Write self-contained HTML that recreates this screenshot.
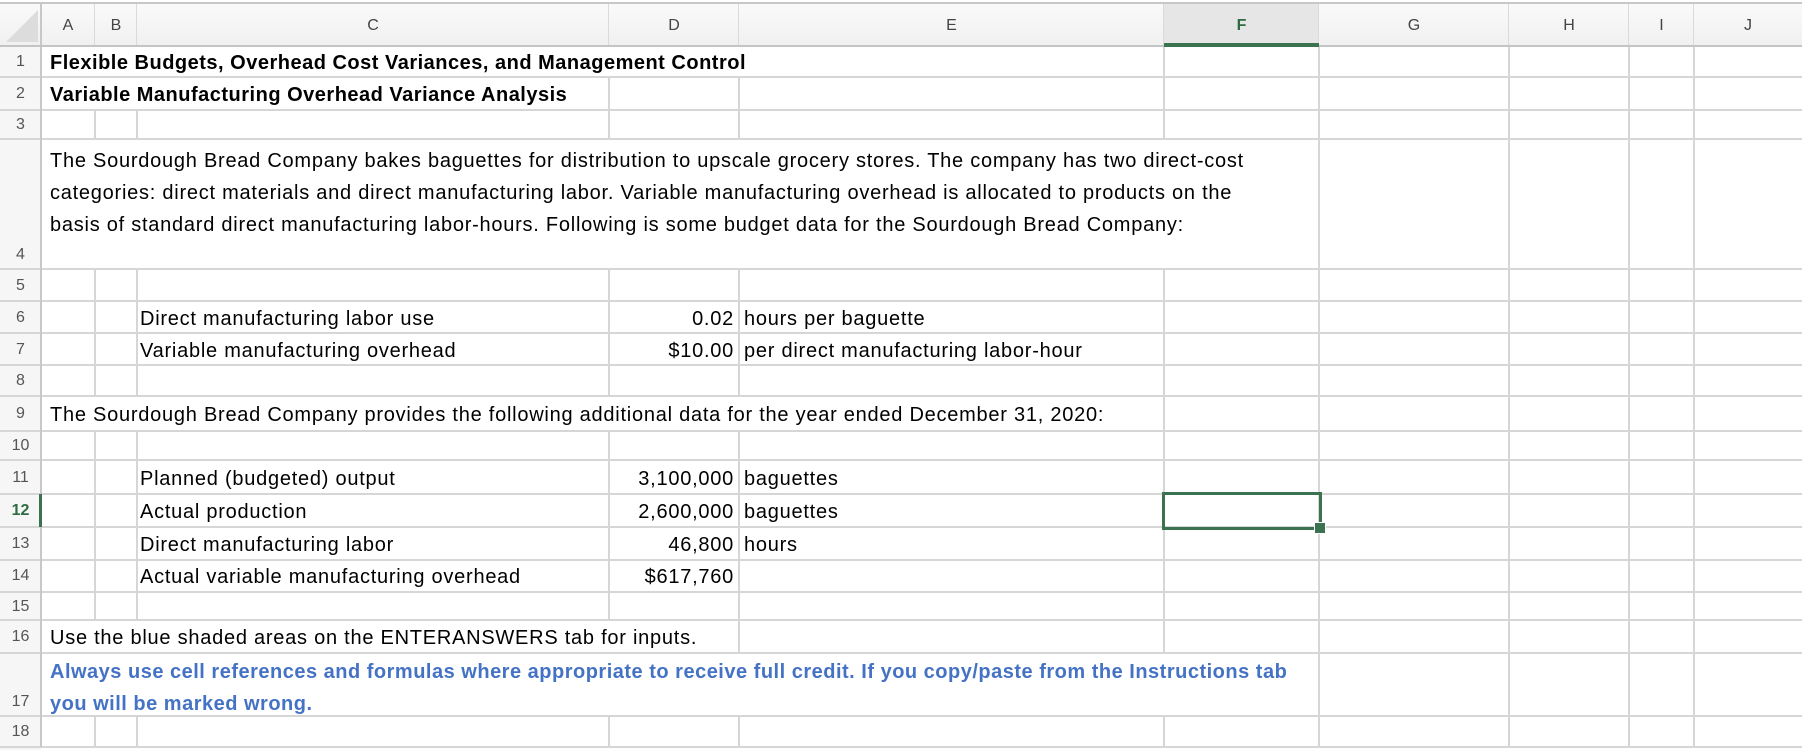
<!DOCTYPE html>
<html><head><meta charset="utf-8"><style>
body{margin:0;width:1802px;height:750px;overflow:hidden;background:#fff;font-family:"Liberation Sans",Arial,sans-serif;position:relative}
.l{position:absolute;background:#d6d6d6}
.t{position:absolute;font-size:20px;letter-spacing:0.75px;color:#000;white-space:nowrap;line-height:20px}
.b{font-weight:bold;letter-spacing:0.5px}
.r{text-align:right}
.hd{position:absolute;font-size:16px;color:#444;text-align:center;line-height:16px}
.rn{position:absolute;left:0;width:41px;text-align:center;font-size:16px;color:#555;line-height:16px}
</style></head><body>
<div style="position:absolute;left:0;top:3px;width:1802px;height:43px;background:linear-gradient(#fafafa,#f0f0f0)"></div>
<div style="position:absolute;left:0;top:46px;width:41px;height:704px;background:#f6f6f6"></div>
<div style="position:absolute;left:0;top:2px;width:1802px;height:2px;background:#c8c8c8"></div>
<div style="position:absolute;left:1164px;top:4px;width:155px;height:42px;background:#e6e6e6"></div>
<svg style="position:absolute;left:4px;top:8px" width="36" height="36"><polygon points="34,2 34,34 2,34" fill="#dcdcdc"/></svg>
<div id="g"></div>
<div style="position:absolute;left:1164px;top:43px;width:155px;height:4px;background:#3b7350"></div>
<div style="position:absolute;left:39px;top:494px;width:3px;height:33px;background:#3b7350"></div>

<div class="hd" style="left:41px;width:54px;top:18px">A</div>
<div class="hd" style="left:95px;width:42px;top:18px">B</div>
<div class="hd" style="left:137px;width:472px;top:18px">C</div>
<div class="hd" style="left:609px;width:130px;top:18px">D</div>
<div class="hd" style="left:739px;width:425px;top:18px">E</div>
<div class="hd" style="left:1164px;width:155px;top:18px;color:#2e6b42;font-weight:bold">F</div>
<div class="hd" style="left:1319px;width:190px;top:18px">G</div>
<div class="hd" style="left:1509px;width:120px;top:18px">H</div>
<div class="hd" style="left:1629px;width:65px;top:18px">I</div>
<div class="hd" style="left:1694px;width:108px;top:18px">J</div>

<div class="rn" style="top:54px">1</div>
<div class="rn" style="top:86px">2</div>
<div class="rn" style="top:117px">3</div>
<div class="rn" style="top:247px">4</div>
<div class="rn" style="top:278px">5</div>
<div class="rn" style="top:310px">6</div>
<div class="rn" style="top:342px">7</div>
<div class="rn" style="top:373px">8</div>
<div class="rn" style="top:406px">9</div>
<div class="rn" style="top:438px">10</div>
<div class="rn" style="top:470px">11</div>
<div class="rn" style="top:503px;color:#2e6b42;font-weight:bold">12</div>
<div class="rn" style="top:536px">13</div>
<div class="rn" style="top:568px">14</div>
<div class="rn" style="top:599px">15</div>
<div class="rn" style="top:629px">16</div>
<div class="rn" style="top:694px">17</div>
<div class="rn" style="top:724px">18</div>

<div class="t b" style="left:50px;top:53px">Flexible Budgets, Overhead Cost Variances, and Management Control</div>
<div class="t b" style="left:50px;top:85px">Variable Manufacturing Overhead Variance Analysis</div>
<div class="t" style="left:50px;top:151px">The Sourdough Bread Company bakes baguettes for distribution to upscale grocery stores. The company has two direct-cost</div>
<div class="t" style="left:50px;top:183px">categories: direct materials and direct manufacturing labor. Variable manufacturing overhead is allocated to products on the</div>
<div class="t" style="left:50px;top:215px">basis of standard direct manufacturing labor-hours. Following is some budget data for the Sourdough Bread Company:</div>
<div class="t" style="left:140px;top:309px">Direct manufacturing labor use</div>
<div class="t" style="left:140px;top:341px">Variable manufacturing overhead</div>
<div class="t r" style="left:609px;width:125px;top:309px">0.02</div>
<div class="t r" style="left:609px;width:125px;top:341px">$10.00</div>
<div class="t" style="left:744px;top:309px">hours per baguette</div>
<div class="t" style="left:744px;top:341px">per direct manufacturing labor-hour</div>
<div class="t" style="left:50px;top:405px">The Sourdough Bread Company provides the following additional data for the year ended December 31, 2020:</div>
<div class="t" style="left:140px;top:469px">Planned (budgeted) output</div>
<div class="t" style="left:140px;top:502px">Actual production</div>
<div class="t" style="left:140px;top:535px">Direct manufacturing labor</div>
<div class="t" style="left:140px;top:567px">Actual variable manufacturing overhead</div>
<div class="t r" style="left:600px;width:134px;top:469px">3,100,000</div>
<div class="t r" style="left:600px;width:134px;top:502px">2,600,000</div>
<div class="t r" style="left:609px;width:125px;top:535px">46,800</div>
<div class="t r" style="left:609px;width:125px;top:567px">$617,760</div>
<div class="t" style="left:744px;top:469px">baguettes</div>
<div class="t" style="left:744px;top:502px">baguettes</div>
<div class="t" style="left:744px;top:535px">hours</div>
<div class="t" style="left:50px;top:628px">Use the blue shaded areas on the ENTERANSWERS tab for inputs.</div>
<div class="t b" style="left:50px;top:662px;color:#4472c4">Always use cell references and formulas where appropriate to receive full credit. If you copy/paste from the Instructions tab</div>
<div class="t b" style="left:50px;top:694px;color:#4472c4">you will be marked wrong.</div>

<div style="position:absolute;left:1162px;top:492px;width:154px;height:32px;border:3px solid #3b7350"></div>
<div style="position:absolute;left:1314px;top:522px;width:10px;height:10px;background:#3b7350;border:1px solid #fff"></div>

<script>
var cols=[41,95,137,609,739,1164,1319,1509,1629,1694];
var rows=[46,77,110,139,269,301,333,365,396,431,460,494,527,560,592,620,653,716,747];
var start=[5,3,0,6,0,0,0,0,5,0,0,0,0,0,0,4,6,0];
var h='';
for(var i=0;i<rows.length;i++){h+='<div class="l" style="left:0;top:'+(rows[i]-1)+'px;width:1802px;height:2px"></div>';}
for(var r=0;r<rows.length-1;r++){
  for(var c=0;c<cols.length;c++){
    if(c>0&&c<start[r])continue;
    if(c==0){h+='<div class="l" style="left:40px;top:'+rows[r]+'px;width:2px;height:'+(rows[r+1]-rows[r])+'px;background:#c8c8c8"></div>';continue;}
    h+='<div class="l" style="left:'+(cols[c]-1)+'px;top:'+rows[r]+'px;width:2px;height:'+(rows[r+1]-rows[r])+'px"></div>';
  }
}
for(var c=1;c<cols.length;c++){h+='<div class="l" style="left:'+(cols[c]-1)+'px;top:4px;width:1px;height:42px;background:#dadada"></div>';}
h+='<div class="l" style="left:40px;top:4px;width:2px;height:42px;background:#c8c8c8"></div>';
h+='<div class="l" style="left:0;top:45px;width:1802px;height:2px;background:#c4c4c4"></div>';
document.getElementById('g').innerHTML=h;
</script>
</body></html>
